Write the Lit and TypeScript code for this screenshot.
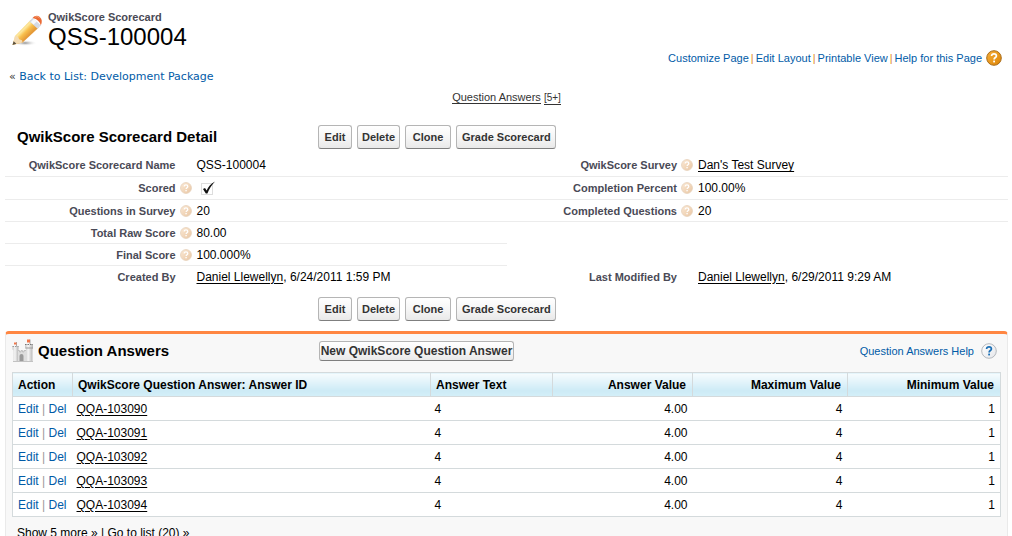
import { LitElement, html, css, svg, nothing, TemplateResult } from "lit";
import { customElement, property } from "lit/decorators.js";

interface Field {
  label: string;
  value?: string;
  link?: string;
  help?: boolean;
  checked?: boolean;
}

const leftFields: Field[] = [
  { label: "QwikScore Scorecard Name", value: "QSS-100004" },
  { label: "Scored", help: true, checked: true },
  { label: "Questions in Survey", value: "20", help: true },
  { label: "Total Raw Score", value: "80.00", help: true },
  { label: "Final Score", value: "100.000%", help: true },
  { label: "Created By", link: "Daniel Llewellyn", value: ", 6/24/2011 1:59 PM" },
];

const rightFields: (Field | null)[] = [
  { label: "QwikScore Survey", link: "Dan's Test Survey", help: true },
  { label: "Completion Percent", value: "100.00%", help: true },
  { label: "Completed Questions", value: "20", help: true },
  null,
  null,
  { label: "Last Modified By", link: "Daniel Llewellyn", value: ", 6/29/2011 9:29 AM" },
];

const answers = ["QQA-103090", "QQA-103091", "QQA-103092", "QQA-103093", "QQA-103094"].map(
  (id) => ({ id, text: "4", value: "4.00", max: "4", min: "1" })
);

const questionMark = (color: string) => svg`
  <path d="M5.6 6.1C5.6 4.6 6.6 3.8 8 3.8s2.4 0.8 2.4 2.1c0 1.6-2.3 1.7-2.3 3.5" fill="none" stroke=${color} stroke-width="1.7"/>
  <rect x="7.2" y="10.6" width="1.8" height="1.8" fill=${color}/>`;

const pencil = html`<svg class="pencil" viewBox="0 0 32 32" aria-hidden="true">
  <defs>
    <linearGradient id="wood" gradientUnits="userSpaceOnUse" x1="10" y1="12" x2="18" y2="20">
      <stop offset="0" stop-color="#f6c65a" /><stop offset="0.3" stop-color="#fde9a0" /><stop offset="0.6" stop-color="#f8bf4c" /><stop offset="1" stop-color="#e59a38" />
    </linearGradient>
    <radialGradient id="shade"><stop offset="0" stop-color="#8e8e8e" /><stop offset="1" stop-color="#fff" stop-opacity="0" /></radialGradient>
  </defs>
  <ellipse cx="14" cy="28" rx="12" ry="3" fill="url(#shade)" />
  <path d="M1.500 30L4 21L19.600 5L27.800 12.600L11.600 27.600Z" fill="url(#wood)" />
  <path d="M1.500 30L4 21L6.800 21.400L8.200 24.200L11 25.200L11.600 27.600Z" fill="#f4dcb4" />
  <path d="M1.500 30L2.600 26.200L5.400 28.800Z" fill="#5a5140" />
  <path d="M18.400 6.200L21.800 2.800L30 10.400L26.600 13.800Z" fill="#d5dae4" />
  <path d="M19.800 7L23 3.800L25.800 6.400L22.600 9.600Z" fill="#f6f8fb" />
  <path d="M21.600 3C23.600 0.400 26.600 0 28.800 2C31.200 4 31.400 7.400 29.800 10.400C29 6.800 26 3.800 21.600 3Z" fill="#ea6a35" />
  <path d="M24.200 2.200C26 1 27.600 1.800 28.800 3.400" fill="none" stroke="#f8a47a" />
</svg>`;

const castle = html`<svg class="castle" viewBox="0 0 22 24" aria-hidden="true">
  <defs><linearGradient id="stone"><stop offset="0" stop-color="#c8c8c8" /><stop offset="0.4" stop-color="#f6f6f6" /><stop offset="1" stop-color="#b4b4b4" /></linearGradient></defs>
  <path d="M6 12h8v10H6z" fill="#dedede" />
  <path d="M6 11.500h1.500v1.500h1.500v-1.500h1.500v1.500h1.500v-1.500h2" fill="none" stroke="#c0c0c0" />
  <path d="M0.500 7h6v3.500l-0.500 1v10.500H1.500V11.500l-1-1z" fill="url(#stone)" />
  <path d="M0.500 7.500h6" stroke="#999" stroke-dasharray="1.500 1" />
  <path d="M13 5h8v4l-0.500 1v12H14V10l-1-1z" fill="url(#stone)" />
  <path d="M13 5.500h8" stroke="#777" stroke-dasharray="1.500 1" />
  <path d="M13.500 9h7.500" stroke="#9c9c9c" />
  <path d="M7.500 22v-5a2 2 0 0 1 4 0V22z" fill="#9a9a9a" />
  <path d="M1 22.500h20" stroke="#c2c2c2" />
  <path d="M4.500 7V3M18 5V0.500" stroke="#888" stroke-width="0.700" />
  <path d="M4.500 3.500h-2.500v2h2.500zM18 0.500h-3v3h3z" fill="#f0764a" />
</svg>`;

/** Round question-mark badge; "tone" picks its palette. */
@customElement("help-badge")
export class HelpBadge extends LitElement {
  @property() tone: "field" | "page" | "list" = "field";

  static styles = css`
    :host { display: inline-flex; flex: none; }
    .badge { display: block; width: 16px; height: 16px; }
    .badge.field { width: 12px; height: 12px; }
  `;

  render() {
    const palette = {
      field: ["#fbe9d5", "#e9c6a3", "#e6d0ba", "#ffffff"],
      page: ["#f7b03c", "#dc8304", "#a96d1c", "#ffffff"],
      list: ["#ffffff", "#e4e6ea", "#b4b8bd", "#1c6fb5"],
    }[this.tone];
    return html`<svg class="badge ${this.tone}" viewBox="0 0 16 16" aria-hidden="true">
      <defs><linearGradient id="g" x1="0" y1="0" x2="1" y2="1">
        <stop offset="0" stop-color=${palette[0]} /><stop offset="1" stop-color=${palette[1]} />
      </linearGradient></defs>
      <circle cx="8" cy="8" r="7.300" fill="url(#g)" stroke=${palette[2]} />
      ${questionMark(palette[3])}
    </svg>`;
  }
}

@customElement("app-root")
export class AppRoot extends LitElement {
  static styles = css`
    :host {
      display: block;
      box-sizing: border-box;
      padding: 8px 4px 0 5px;
      background: #fff;
      color: #000;
      font: 12px/16px "Liberation Sans", Arial, sans-serif;
    }
    a { color: #015ba7; text-decoration: none; }
    h1, h2, dl, dd, dt { margin: 0; }

    .top { display: flex; justify-content: space-between; padding-left: 6px; }
    .identity { display: flex; gap: 5px; padding-top: 1px; }
    .pencil { width: 32px; height: 32px; margin-top: 6px; }
    .kind { display: block; font-size: 11px; line-height: 16px; color: #4a4a56; }
    .name { display: block; font-size: 24px; line-height: 24px; font-weight: 400; }
    .heading { font-size: 11px; font-weight: 700; }
    .page-links {
      display: flex; align-items: center; gap: 2px;
      padding: 42px 6px 0 0; font-size: 11px; line-height: 16px; color: #e08a1e;
    }
    .page-links .page-help { display: flex; align-items: center; gap: 4px; }
    .back {
      padding: 3px 4px 0 4px; font: 11px/16px "DejaVu Sans", Verdana, sans-serif; color: #333;
    }
    .jump { padding-top: 4px; text-align: center; font-size: 11px; line-height: 16px; }
    .jump a { color: #333; border-bottom: 1px solid #333; line-height: 12px; display: inline-block; }
    .jump .count { font-size: 10px; }

    .bar { display: grid; grid-template-columns: 313px 1fr; align-items: center; }
    .bar h2 { font-size: 15px; line-height: 20px; }
    .detail-bar { padding: 20px 0 5px; }
    .detail-bar h2 { padding-left: 12px; }
    .bottom-bar { padding: 9px 0 10px; }
    .buttons { display: flex; gap: 5px; }
    button {
      box-sizing: border-box; height: 24px; padding: 0 5px; white-space: nowrap;
      border: 1px solid #b5b5b5; border-bottom-color: #7f7f7f; border-radius: 3px;
      background: linear-gradient(#fff, #f6f6f6 50%, #e9e9e9);
      font: 700 11px/16px "Liberation Sans", Arial, sans-serif; color: #333;
    }
    .edit { width: 34px; }
    .delete { width: 43px; padding: 0; }
    .clone { width: 46px; }
    .grade { width: 100px; }
    .new { display: block; height: 20px; width: 195px; padding: 0; font-size: 12px; }

    .fields { display: grid; grid-template-columns: 1fr 1fr; }
    .row {
      display: grid; grid-template-columns: 34% 21px 1fr; align-items: center;
      box-sizing: border-box; height: 22px; border-bottom: 1px solid #ececec;
    }
    .row:nth-child(-n + 2) { height: 23px; }
    .row.empty, .row:last-child { border-bottom-color: transparent; }
    .row dt { text-align: right; font-size: 11px; font-weight: 700; color: #4a4a56; }
    .mark { display: flex; padding-left: 4px; }
    .row a { color: #000; text-decoration: underline; text-underline-offset: 2px; }
    .check { display: block; width: 17px; height: 16px; margin-left: 3px; }

    .panel {
      border: 1px solid #eaeaea; border-top: 3px solid #ff8642;
      border-radius: 4px 4px 0 0; background: #f8f8f8; padding: 0 6px 4px;
    }
    .panel-head {
      display: grid; grid-template-columns: 307px 1fr auto; align-items: center;
      height: 34px; padding-bottom: 4px;
    }
    .title { display: flex; align-items: center; gap: 4px; }
    .title h2 { font-size: 15px; line-height: 20px; }
    .castle { width: 22px; height: 24px; }
    .list-help { display: flex; align-items: center; gap: 7px; padding-right: 4px; font-size: 11px; }

    table {
      width: 100%; table-layout: fixed; border-collapse: collapse;
      border: 1px solid #d4dadc; background: #fff;
    }
    th, td { box-sizing: border-box; height: 24px; padding: 0 5px; text-align: left; border-bottom: 1px solid #d4dadc; }
    th { padding: 0 6px 0 5px; border-right: 1px solid #d4dadc; background: linear-gradient(#f7fcfe, #cdebf6 75%, #d4eff8); }
    td:first-child { color: #999; }
    td.id a { color: #000; text-decoration: underline; text-underline-offset: 2px; }
    td.id, td.text { padding-left: 4px; }
    .num { text-align: right; }
    .action { width: 60px; }
    .text { width: 122px; }
    .value { width: 140px; }
    .max { width: 155px; }
    .min { width: 153px; }
    .more { padding: 8px 5px 0; }
    .more a { color: #000; }
  `;

  private actions(): TemplateResult {
    return html`<div class="buttons">
      <button class="edit" type="button">Edit</button>
      <button class="delete" type="button">Delete</button>
      <button class="clone" type="button">Clone</button>
      <button class="grade" type="button">Grade Scorecard</button>
    </div>`;
  }

  private field(f: Field | null): TemplateResult {
    if (!f) return html`<div class="row empty"></div>`;
    return html`<div class="row">
      <dt>${f.label}</dt>
      <dd class="mark">${f.help ? html`<help-badge></help-badge>` : nothing}</dd>
      <dd>${f.checked
        ? html`<svg class="check" viewBox="0 0 17 16" role="img" aria-label="Checked">
            <rect x="1.500" y="3.500" width="11" height="11" fill="none" stroke="#bbb" stroke-dasharray="1 1" />
            <path d="M3 9L5 8L6.600 10.600C8.400 6.800 11 3.600 15 1.600C11.600 5 9.400 8.800 7.400 13.400L5.800 13.600Z" fill="#111" />
          </svg>`
        : nothing}${f.link ? html`<a href="#">${f.link}</a>` : nothing}${f.value ?? nothing}</dd>
    </div>`;
  }

  render() {
    return html`
      <header class="top">
        <div class="identity">
          ${pencil}
          <h1 class="heading"><span class="kind">QwikScore Scorecard</span><span class="name">QSS-100004</span></h1>
        </div>
        <nav class="page-links">
          <a href="#">Customize Page</a>|<a href="#">Edit Layout</a>|<a href="#">Printable View</a>|<a class="page-help" href="#">Help for this Page <help-badge tone="page"></help-badge></a>
        </nav>
      </header>
      <div class="back">« <a href="#">Back to List: Development Package</a></div>
      <div class="jump"><a href="#answers">Question Answers</a> <a class="count" href="#answers">[5+]</a></div>

      <section>
        <div class="bar detail-bar"><h2>QwikScore Scorecard Detail</h2>${this.actions()}</div>
        <div class="fields">
          <dl>${leftFields.map((f) => this.field(f))}</dl>
          <dl>${rightFields.map((f) => this.field(f))}</dl>
        </div>
        <div class="bar bottom-bar"><span></span>${this.actions()}</div>
      </section>

      <section class="panel" id="answers">
        <div class="panel-head">
          <div class="title">${castle}<h2>Question Answers</h2></div>
          <div><button class="new" type="button">New QwikScore Question Answer</button></div>
          <a class="list-help" href="#">Question Answers Help <help-badge tone="list"></help-badge></a>
        </div>
        <table>
          <thead>
            <tr>
              <th class="action">Action</th>
              <th class="id">QwikScore Question Answer: Answer ID</th>
              <th class="text">Answer Text</th>
              <th class="num value">Answer Value</th>
              <th class="num max">Maximum Value</th>
              <th class="num min">Minimum Value</th>
            </tr>
          </thead>
          <tbody>
            ${answers.map((a) => html`<tr>
              <td><a href="#">Edit</a> | <a href="#">Del</a></td>
              <td class="id"><a href="#">${a.id}</a></td>
              <td class="text">${a.text}</td>
              <td class="num">${a.value}</td>
              <td class="num">${a.max}</td>
              <td class="num">${a.min}</td>
            </tr>`)}
          </tbody>
        </table>
        <div class="more"><a href="#">Show 5 more »</a> | <a href="#">Go to list (20) »</a></div>
      </section>
    `;
  }
}
